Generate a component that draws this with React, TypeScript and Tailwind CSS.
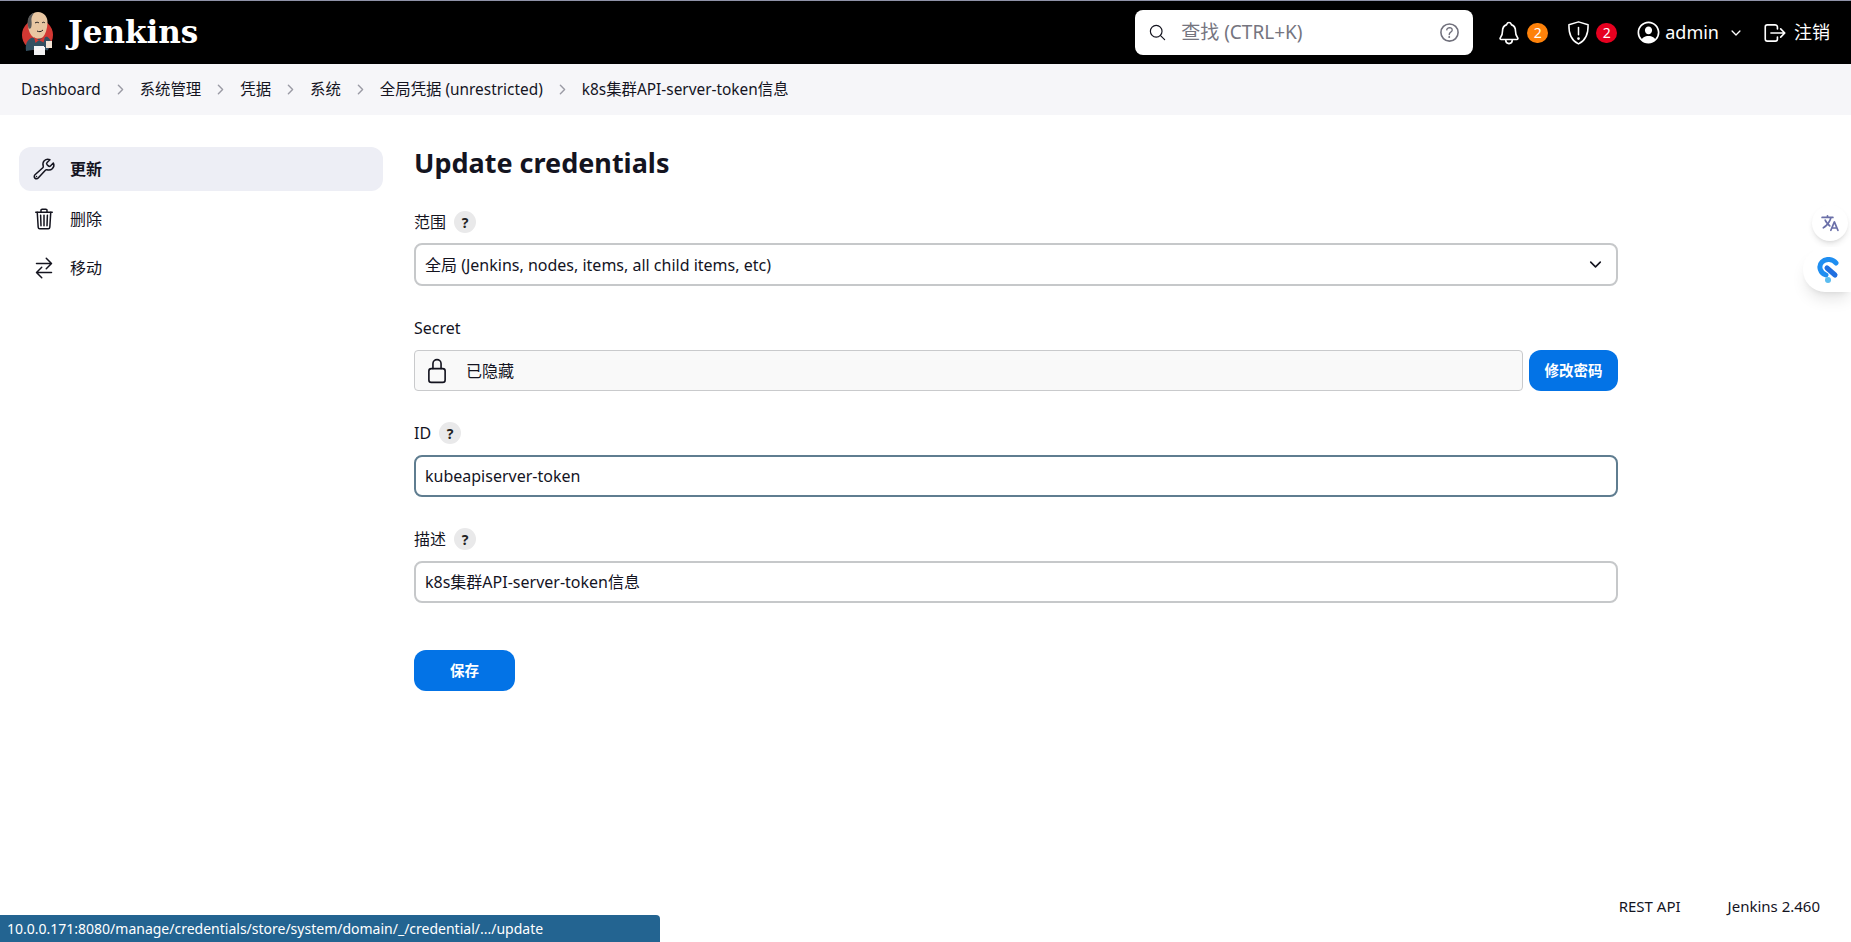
import {
  IoBuildOutline,
  IoChevronDown,
  IoChevronForward,
  IoHelpCircleOutline,
  IoLanguage,
  IoLockClosedOutline,
  IoLogOutOutline,
  IoNotificationsOutline,
  IoPersonCircleOutline,
  IoSearchOutline,
  IoSwapHorizontalOutline,
  IoTrashOutline,
} from 'react-icons/io5'

const crumbs = ['Dashboard', '系统管理', '凭据', '系统', '全局凭据 (unrestricted)', 'k8s集群API-server-token信息']

function JenkinsLogo() {
  return (
    <svg width="34" height="46" viewBox="0 0 34 46" className="shrink-0">
      <circle cx="16.500" cy="25" r="15.500" fill="#d33833" />
      <path d="M7 16C6 7 11 2 17 2s10 5 9.500 11c-.3 6-2 11-4.500 14-3 2-7 2-10 0-2.500-2-4.500-6-5-11z" fill="#e9c7a2" />
      <path d="M7.500 18C5 10 8 4 13 3c-2 3-3 5-2.500 8 .3 2 .3 5-.5 7-1 1-2 1-2.500 0z" fill="#5a5a5a" />
      <path d="M5 41c-1-7 1-11 6-13.500l5 1.500 5-.5 5-2c3 2 4.500 5 4.500 8l-4 6-8-2-7 1.500z" fill="#335061" />
      <path d="M13 27l5 3.500 6-4-1.500 6-4.500-2.500-3.500 3z" fill="#d33833" />
      <path d="M13 36h10v1h1v8H13z" fill="#fff" opacity="0.95" />
      <path d="M25 31h6v7h-6z" fill="#f2e3d4" />
      <path d="M14 13c1.500-1 3-1 4 0M21 13c1-1 2-1 3 0M16 21c2 1 4 1 6-1" stroke="#231f20" strokeWidth="1" fill="none" />
    </svg>
  )
}

function ShieldIcon() {
  return (
    <svg width="23" height="24" viewBox="2 1 20 22.500" fill="none" stroke="currentColor" strokeWidth="1.400" strokeLinejoin="round" strokeLinecap="round">
      <path d="M12 1.800 3 4.500c-.2 7.500 1.500 14.500 9 18 7.500-3.500 9.200-10.500 9-18z" />
      <path d="M12 7v7" />
      <circle cx="12" cy="17.500" r=".6" fill="currentColor" />
    </svg>
  )
}

function HelpBadge() {
  return (
    <span className="flex h-[22px] w-[22px] items-center justify-center rounded-full bg-[#e9e9ea] text-[14px] font-bold text-[#222]">?</span>
  )
}

function TaskLink({ icon, label, active }: { icon: React.ReactNode; label: string; active?: boolean }) {
  return (
    <a className={`flex h-11 items-center gap-[14px] rounded-xl pl-[13px] text-[16px] text-[#14141f] ${active ? 'bg-[#edeef5] font-bold' : ''}`}>
      <span className="flex w-[24px] justify-center text-[26px]">{icon}</span>
      <span>{label}</span>
    </a>
  )
}

export default function App() {
  return (
    <div className="relative flex h-screen flex-col overflow-hidden bg-white font-['Noto_Sans','Noto_Sans_CJK_SC',sans-serif] text-[#14141f]">
      <header className="flex h-16 shrink-0 items-center border-t border-[#8f92a8] bg-black pl-[21px] pr-[21px] text-white">
        <JenkinsLogo />
        <span className="ml-[13px] font-['DejaVu_Serif',serif] text-[31px] font-bold leading-none">Jenkins</span>

        <div className="ml-auto flex h-[45px] w-[338px] items-center rounded-lg bg-white pl-[13px] pr-[11px] text-[#14141f]">
          <IoSearchOutline className="text-[19px]" />
          <span className="ml-[14px] text-[19px] text-[#75757f]">查找 (CTRL+K)</span>
          <IoHelpCircleOutline className="ml-auto text-[25px] text-[#70707c]" />
        </div>

        <IoNotificationsOutline className="ml-[23px] text-[26px]" />
        <span className="ml-[5px] flex h-5 w-[21px] items-center justify-center rounded-full bg-[#fe820a] text-[14px]">2</span>
        <span className="ml-[19px]"><ShieldIcon /></span>
        <span className="ml-[6px] flex h-5 w-[21px] items-center justify-center rounded-full bg-[#e6001f] text-[14px]">2</span>
        <IoPersonCircleOutline className="ml-[18px] text-[27px]" />
        <span className="ml-[3px] text-[18px]">admin</span>
        <IoChevronDown className="ml-[10px] text-[14px]" />
        <IoLogOutOutline className="ml-[19px] text-[26px]" />
        <span className="ml-[6px] text-[18px]">注销</span>
      </header>

      <nav className="flex h-[51px] shrink-0 items-center bg-[#f6f6f9] pl-[21px] text-[15.400px]">
        {crumbs.map((c, i) => (
          <span key={c} className="flex items-center">
            {i > 0 && <IoChevronForward className="mx-[12px] text-[15px] text-[#9b9ba5]" />}
            <span>{c}</span>
          </span>
        ))}
      </nav>

      <div className="flex flex-1">
        <aside className="ml-[19px] mt-8 flex w-[364px] shrink-0 flex-col gap-[5.500px]">
          <TaskLink icon={<IoBuildOutline />} label="更新" active />
          <TaskLink icon={<IoTrashOutline />} label="删除" />
          <TaskLink icon={<IoSwapHorizontalOutline />} label="移动" />
        </aside>

        <main className="ml-[31px] w-[1204px] pt-[28px]">
          <h1 className="text-[27px] font-bold leading-[40px]">Update credentials</h1>

          <div className="mt-[27px] flex h-[24px] items-center gap-[8px] text-[16px]">
            <span>范围</span>
            <HelpBadge />
          </div>
          <div className="mt-[9px] flex h-[43px] items-center justify-between rounded-lg border-2 border-[#c6c8ca] pl-[9px] pr-[12px] text-[16px]">
            <span>全局 (Jenkins, nodes, items, all child items, etc)</span>
            <IoChevronDown className="text-[17px]" />
          </div>

          <div className="mt-[30px] h-[24px] text-[16px] leading-[24px]">Secret</div>
          <div className="mt-[10px] flex h-[41px] gap-[6px]">
            <div className="flex flex-1 items-center rounded border border-[#c9cacc] bg-[#f9f9f9] pl-[9px] text-[16px]">
              <IoLockClosedOutline className="text-[26px]" />
              <span className="ml-[16px]">已隐藏</span>
            </div>
            <button className="w-[89px] rounded-xl bg-[#0373e6] text-[14.500px] font-bold text-white">修改密码</button>
          </div>

          <div className="mt-[30px] flex h-[24px] items-center gap-[8px] text-[16px]">
            <span>ID</span>
            <HelpBadge />
          </div>
          <div className="mt-[10px] flex h-[42px] items-center rounded-lg border-2 border-[#5f7d90] pl-[9px] text-[16px]">
            kubeapiserver-token
          </div>

          <div className="mt-[30px] flex h-[24px] items-center gap-[8px] text-[16px]">
            <span>描述</span>
            <HelpBadge />
          </div>
          <div className="mt-[10px] flex h-[42px] items-center rounded-lg border-2 border-[#c6c8ca] pl-[9px] text-[16px]">
            k8s集群API-server-token信息
          </div>

          <button className="mt-[47px] h-[41px] w-[101px] rounded-xl bg-[#0373e6] text-[14.500px] font-bold text-white">保存</button>
        </main>
      </div>

      <footer className="flex h-[72px] shrink-0 justify-end gap-[47px] pr-[31px] pt-[25px] text-[15px]">
        <span>REST API</span>
        <span>Jenkins 2.460</span>
      </footer>

      <div className="absolute bottom-0 left-0 flex h-[27px] w-[660px] items-center rounded-tr bg-[#236491] pl-[7px] text-[14px] text-white">
        10.0.0.171:8080/manage/credentials/store/system/domain/_/credential/.../update
      </div>

      <div className="absolute right-[3px] top-[205px] flex h-[36px] w-[36px] items-center justify-center rounded-full bg-white text-[20px] text-[#6a6fa8] shadow-md">
        <IoLanguage />
      </div>
      <div className="absolute right-0 top-[247px] flex h-[45px] w-[48px] items-center rounded-l-[22px] bg-white pl-[14px] shadow-lg">
        <svg width="22" height="26" viewBox="0 0 22 26" fill="none">
          <path d="M9 18C3 16 1 9 5 5c4-4 11-3 14 1" stroke="#1f8ef1" strokeWidth="5" strokeLinecap="round" />
          <path d="M10 11l8 7" stroke="#1f6fe0" strokeWidth="5" strokeLinecap="round" />
          <circle cx="11" cy="23" r="3" fill="#5bbcf0" />
        </svg>
      </div>
    </div>
  )
}
